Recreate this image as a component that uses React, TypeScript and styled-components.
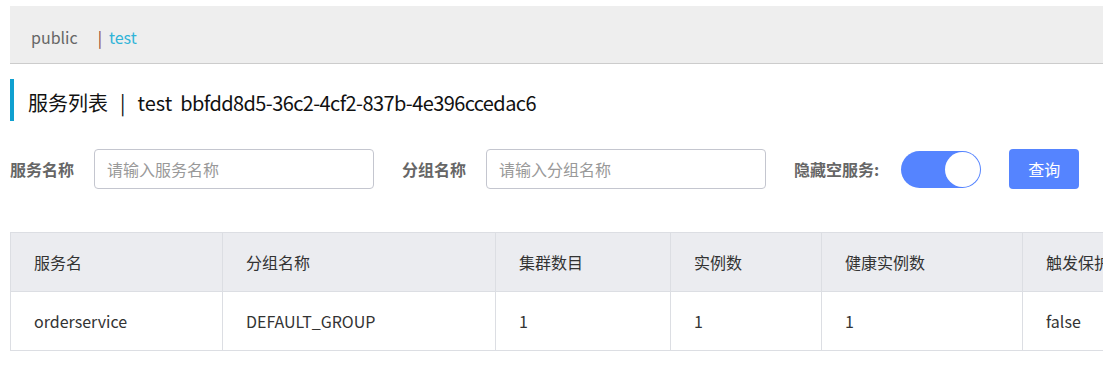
import React from "react";
import styled, { createGlobalStyle } from "styled-components";

const GlobalStyle = createGlobalStyle`
  html, body {
    margin: 0;
    padding: 0;
    background: #fff;
    overflow: hidden;
  }
  body {
    font-family: "Noto Sans CJK SC", "Liberation Sans", sans-serif;
    color: #333;
  }
`;

const Page = styled.div`
  width: 1300px;
  padding: 6px 0 0 10px;
  box-sizing: border-box;
`;

const NamespaceBar = styled.div`
  height: 58px;
  box-sizing: border-box;
  background: #eeeeee;
  border-bottom: 1px solid #cccccc;
  display: flex;
  align-items: center;
  padding: 4px 0 0 21px;
  font-size: 16px;
`;

const NsItem = styled.span<{ active?: boolean }>`
  color: ${({ active }) => (active ? "#30b4d8" : "#666")};
  cursor: pointer;
`;

const NsDivider = styled.span`
  color: #8b3a2a;
  margin: 0 7px 0 20px;
`;

const TitleBlock = styled.div`
  margin-top: 15px;
  height: 42px;
  box-sizing: border-box;
  border-left: 4px solid #0fa0d0;
  padding: 5px 0 0 14px;
  display: flex;
  align-items: center;
  font-size: 20px;
  color: #111;
`;

const TitleSep = styled.span`
  margin: 0 12px;
`;

const TitleNs = styled.span`
  margin-right: 8px;
`;

const TitleId = styled.span`
  letter-spacing: -0.6px;
`;

const FilterRow = styled.div`
  margin-top: 28px;
  display: flex;
  align-items: center;
  height: 40px;
`;

const FilterItem = styled.div`
  display: flex;
  align-items: center;
  margin-right: 28px;
`;

const Label = styled.span<{ gap?: number }>`
  font-size: 16px;
  font-weight: bold;
  color: #666;
  margin-right: ${({ gap }) => gap ?? 20}px;
`;

const Input = styled.input`
  width: 280px;
  height: 40px;
  box-sizing: border-box;
  border: 1px solid #c4c6cf;
  border-radius: 4px;
  padding: 0 12px;
  font-size: 16px;
  font-family: inherit;
  color: #333;
  outline: none;
  &::placeholder {
    color: #999;
  }
`;

const Switch = styled.div<{ on?: boolean }>`
  width: 80px;
  height: 37px;
  border-radius: 19px;
  background: ${({ on }) => (on ? "#5584ff" : "#ccc")};
  display: flex;
  align-items: center;
  justify-content: ${({ on }) => (on ? "flex-end" : "flex-start")};
  padding: 1px;
  box-sizing: border-box;
`;

const Knob = styled.span`
  width: 35px;
  height: 35px;
  border-radius: 50%;
  background: #fff;
`;

const Button = styled.button`
  width: 70px;
  height: 40px;
  border: none;
  border-radius: 4px;
  background: #5584ff;
  color: #fff;
  font-size: 16px;
  font-family: inherit;
  cursor: pointer;
`;

const Table = styled.table`
  margin-top: 43px;
  width: 1212px;
  border-collapse: collapse;
  table-layout: fixed;
  font-size: 16px;
  color: #333;
`;

const Th = styled.th<{ w: number }>`
  width: ${({ w }) => w}px;
  box-sizing: border-box;
  height: 59px;
  background: #ebecf0;
  border: 1px solid #dcdee3;
  text-align: left;
  font-weight: normal;
  padding: 0 0 0 23px;
  white-space: nowrap;
  overflow: hidden;
`;

const Td = styled.td`
  height: 58px;
  border: 1px solid #dcdee3;
  padding: 0 0 0 23px;
  white-space: nowrap;
`;

const columns = [
  { title: "服务名", w: 212 },
  { title: "分组名称", w: 273 },
  { title: "集群数目", w: 175 },
  { title: "实例数", w: 151 },
  { title: "健康实例数", w: 201 },
  { title: "触发保护阈值", w: 200 },
];

const rows = [["orderservice", "DEFAULT_GROUP", "1", "1", "1", "false"]];

export default function App() {
  return (
    <Page>
      <GlobalStyle />
      <NamespaceBar>
        <NsItem>public</NsItem>
        <NsDivider>|</NsDivider>
        <NsItem active>test</NsItem>
      </NamespaceBar>

      <TitleBlock>
        <span>服务列表</span>
        <TitleSep>|</TitleSep>
        <TitleNs>test</TitleNs>
        <TitleId>bbfdd8d5-36c2-4cf2-837b-4e396ccedac6</TitleId>
      </TitleBlock>

      <FilterRow>
        <FilterItem>
          <Label>服务名称</Label>
          <Input placeholder="请输入服务名称" />
        </FilterItem>
        <FilterItem>
          <Label>分组名称</Label>
          <Input placeholder="请输入分组名称" />
        </FilterItem>
        <FilterItem>
          <Label gap={22}>隐藏空服务:</Label>
          <Switch on>
            <Knob />
          </Switch>
        </FilterItem>
        <Button>查询</Button>
      </FilterRow>

      <Table>
        <thead>
          <tr>
            {columns.map((c) => (
              <Th key={c.title} w={c.w}>
                {c.title}
              </Th>
            ))}
          </tr>
        </thead>
        <tbody>
          {rows.map((r, i) => (
            <tr key={i}>
              {r.map((cell, j) => (
                <Td key={j}>{cell}</Td>
              ))}
            </tr>
          ))}
        </tbody>
      </Table>
    </Page>
  );
}
